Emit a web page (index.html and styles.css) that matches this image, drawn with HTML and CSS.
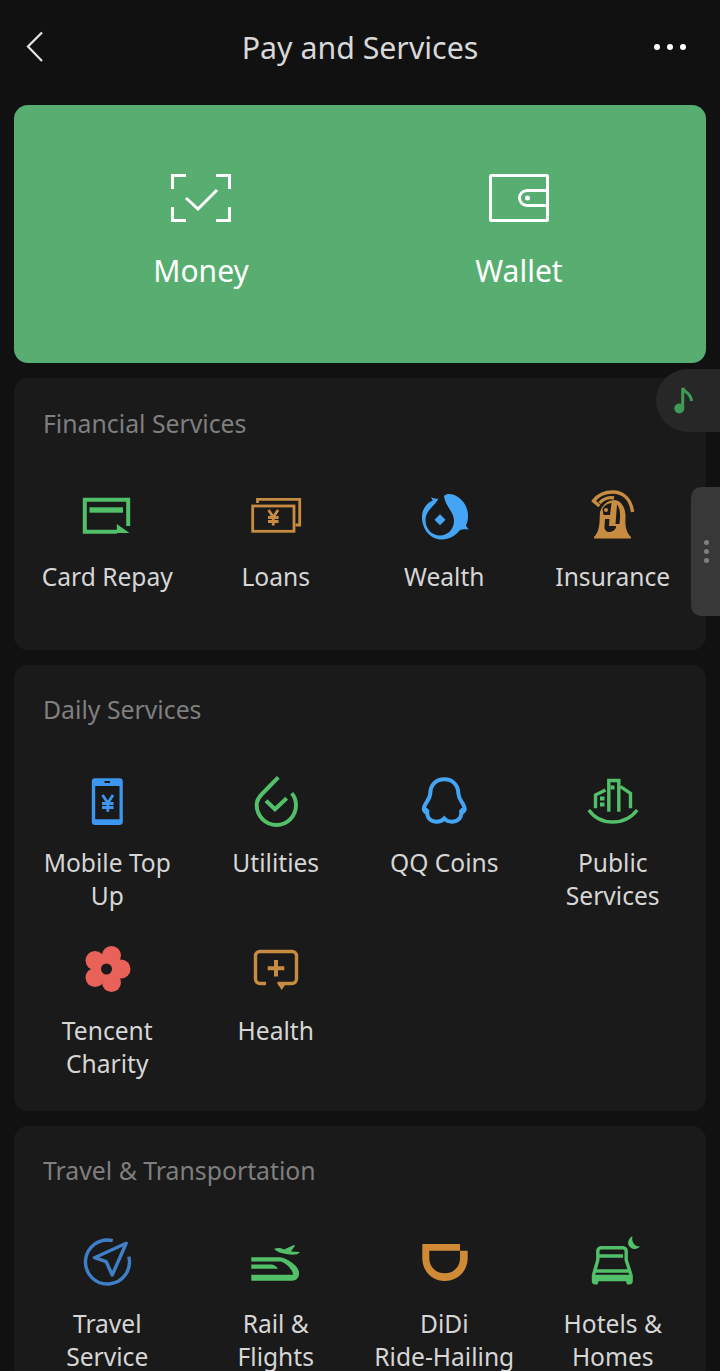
FILE: index.html
```html
<!DOCTYPE html>
<html>
<head>
    <title>Pay and Services</title>
    <link rel="stylesheet" href="styles.css">
</head>
<body>
    <div class="topbar">
        <svg class="back" width="20" height="34" viewBox="0 0 20 34"><path d="M17 2.500 3 16.500 17 31"/></svg>
        <div class="page-title">Pay and Services</div>
        <svg class="more" width="34" height="8" viewBox="0 0 34 8"><circle cx="4" cy="4" r="3"/><circle cx="17" cy="4" r="3"/><circle cx="30" cy="4" r="3"/></svg>
    </div>

    <div class="hero">
        <div class="hero-item">
            <svg class="hero-icon" width="60" height="48" viewBox="0 0 60 48"><path d="M15 1.500H1.500V15M45 1.500H58.500V15M15 46.500H1.500V33M45 46.500H58.500V33M15 24 27 35 46 16"/></svg>
            <div class="hero-label">Money</div>
        </div>
        <div class="hero-item">
            <svg class="hero-icon" width="60" height="48" viewBox="0 0 60 48"><rect x="1.500" y="1.500" width="57" height="45" rx="1"/><path d="M58 16.500H38a7.500 7.500 0 0 0 0 15H58"/><circle class="hero-dot" cx="38.500" cy="24" r="2.500"/></svg>
            <div class="hero-label">Wallet</div>
        </div>
    </div>

    <div class="card card-first">
        <div class="card-title">Financial Services</div>
        <div class="grid">
            <div class="item">
                <svg class="icon" viewBox="0 0 56 56"><path class="line green wide" d="M49.200 38V11.800H5.800V43.700H38"/><rect class="solid green" x="10.500" y="19.300" width="33.500" height="5.400"/><path class="solid green" d="M37.800 36 50.500 45H37.800Z"/></svg>
                <div class="label">Card Repay</div>
            </div>
            <div class="item">
                <svg class="icon" viewBox="0 0 56 56"><path class="line orange thin" d="M9.500 15V11.300H51.700V37H47.500"/><rect class="line orange thin" x="4.700" y="18" width="41.300" height="25.300"/><path class="line orange thin" d="M20.500 22 25.300 29 30.100 22M25.300 29V37.500M20 29.500H30.600M20 33.500H30.600"/></svg>
                <div class="label">Loans</div>
            </div>
            <div class="item">
                <svg class="icon" viewBox="0 0 56 56"><path class="solid blue" d="M15 9C17 10.500 20 11 22.500 10.500 20 17 9.500 22 9.500 32 9.500 41 16 47.500 24 47.500 32 47.500 38 41 38 32.500 38 24 29 18 28 8 31 5 37 5.500 42 9 48 13 52 20 52 28 52 32 51 35 50 37.500 50.500 39 51.500 40 53 41.500 49 41 46 41 44 42 39 48 33 51.500 26 51.500 14 51.500 6 41 6 29 6 22 10 15 17 12.500 16 11.500 15.500 10 15 9Z"/><path class="solid blue" d="M24 26.200 29.500 31.700 24 37.200 18.500 31.700Z"/></svg>
                <div class="label">Wealth</div>
            </div>
            <div class="item">
                <svg class="icon" viewBox="0 0 56 56"><path class="line orange" d="M47.500 24C46 11 38 4 28 4 20 4 12.500 7.500 8.500 13L14.500 18M14.500 15C18 11 24 9 29 10"/><path class="solid orange" d="M15 24C17 17 23 12 30 12 37 13 41 21 40.500 30 40 38 41 44 46 49V50.500H9V49C13 45 14 40 14.500 34Z"/><path class="hole" d="M17.500 21C19 17.500 22 15.500 26.500 15L25 27H18.500ZM32 16.500C34 19 35.500 23 35 30L34.500 36H30.500ZM20 31H24.500L24 38H31C31.500 41 28 44 24.500 44 21 44 19 41 19.500 38Z"/><circle class="solid orange" cx="21" cy="22" r="2"/></svg>
                <div class="label">Insurance</div>
            </div>
        </div>
    </div>

    <div class="card card-daily">
        <div class="card-title">Daily Services</div>
        <div class="grid">
            <div class="item">
                <svg class="icon" viewBox="0 0 56 56"><path class="solid phone" fill-rule="evenodd" d="M16 5.300H40.500A3.300 3.300 0 0 1 43.800 8.600V48.700A3.300 3.300 0 0 1 40.500 52H16A3.300 3.300 0 0 1 12.800 48.700V8.600A3.300 3.300 0 0 1 16 5.300ZM16.200 13V46.300H40.500V13ZM25.500 8V10H31V8Z"/><path class="line phone thin" d="M23.500 22 28.800 30 34 22M28.800 30V38.700M23 30.500H34.500M23 34.500H34.500"/></svg>
                <div class="label">Mobile Top Up</div>
            </div>
            <div class="item">
                <svg class="icon" viewBox="0 0 56 56"><path class="line green wide" d="M30.300 4.300 14 21C10.500 24.500 8.700 27.500 8.700 32 8.700 43 17.500 52 28.500 52 39.500 52 48 43 48 32 48 27.500 46.500 23.500 43.700 20.300M18 27.700 27 36.300 38.700 25.300"/></svg>
                <div class="label">Utilities</div>
            </div>
            <div class="item">
                <svg class="icon" viewBox="0 0 56 56"><path class="line blue wide" d="M28.300 6.300C20 6.300 14.500 12 14.300 20 14.200 25 11.500 27.500 9.500 31 7.500 34.500 7.500 37.500 9 38.500L12 36.500C10.500 38.500 11 43 13 45.500 16 49 23.500 50.500 28.300 45.500 33 50.500 40.500 49 43.500 45.500 45.500 43 46 38.500 44.500 36.500L47.500 38.500C49 37.500 49 34.500 47 31 45 27.500 42.500 25 42.300 20 42 12 36.500 6.300 28.300 6.300Z"/></svg>
                <div class="label">QQ Coins</div>
            </div>
            <div class="item">
                <svg class="icon" viewBox="0 0 56 56"><path class="line green" d="M3.800 37C15 53 40 53 52.200 37M23.800 38.700V7.500H33.800V38.700M35.500 13.700 45.500 20.300V35.300M20.500 17 10.500 22V35.300"/><path class="solid green" d="M15 23.500H19.500V27.500H15ZM15 29.500H19.500V33.500H15ZM25.500 12.500H29.500V16.500H25.500Z"/></svg>
                <div class="label">Public Services</div>
            </div>
            <div class="item">
                <svg class="icon" viewBox="0 0 56 56"><g class="solid red"><circle cx="42" cy="28" r="9.500"/><circle cx="32.500" cy="14.500" r="9.500"/><circle cx="16" cy="19.500" r="9.500"/><circle cx="16" cy="36.500" r="9.500"/><circle cx="32.500" cy="41.500" r="9.500"/><circle cx="28" cy="28" r="13"/></g><circle class="hole" cx="27.500" cy="28" r="5.500"/></svg>
                <div class="label">Tencent Charity</div>
            </div>
            <div class="item">
                <svg class="icon" viewBox="0 0 56 56"><path class="line orange" d="M18 42.500H12A4.500 4.500 0 0 1 7.500 38V15A4.500 4.500 0 0 1 12 10.500H44A4.500 4.500 0 0 1 48.500 15V38A4.500 4.500 0 0 1 44 42.500H30"/><path class="solid orange" d="M28.700 41.500H38.700L33.700 49ZM26 19H30V25.300H36.300V29.300H30V35.600H26V29.300H19.700V25.300H26Z"/></svg>
                <div class="label">Health</div>
            </div>
        </div>
    </div>

    <div class="card">
        <div class="card-title">Travel &amp; Transportation</div>
        <div class="grid">
            <div class="item">
                <svg class="icon" viewBox="0 0 56 56"><path class="line navy" d="M49.800 22.700A22 22 0 1 1 33.800 6.700"/><path class="line navy round" d="M47.200 9.300 15.500 23.700 27.200 27.700 33.200 41Z"/></svg>
                <div class="label">Travel Service</div>
            </div>
            <div class="item">
                <svg class="icon" viewBox="0 0 56 56"><path class="solid green" d="M26 15C30 13.500 33 14 36 15.500L46 11 47 11.500 43 17.500 52 18C50 21 45 21 42 20.500 35 20 29 18 26 15ZM3.300 23.300H32C38 24 50 31 51 38 51.500 43 49 46.700 44 46.700H3.300V40.700H45C45 36 38 29 33 27.500H3.300ZM3.300 30.500H24C27 31 29 33 30 34.700H3.300Z"/></svg>
                <div class="label">Rail &amp;<br>Flights</div>
            </div>
            <div class="item">
                <svg class="icon" viewBox="0 0 56 56"><path class="solid didi" fill-rule="evenodd" d="M6.300 10H44V16.700H51.700V24.300C51.700 37 41.500 47 28.700 47 16 47 6.300 37 6.300 24.300ZM13.300 16.700V24.300C13.300 33 20 39.300 28.700 39.300 37.500 39.300 44 33 44 24.300V16.700Z"/></svg>
                <div class="label">DiDi<br>Ride-Hailing</div>
            </div>
            <div class="item">
                <svg class="icon" viewBox="0 0 56 56"><path class="line green" d="M8.500 41 12.800 26V17A3.300 3.300 0 0 1 16 13.700H38A3.300 3.300 0 0 1 41.200 17V26L46 41M13 22H38M9.500 37H44.500"/><path class="solid green" d="M6.800 40.700H47.800V47C47.800 49.500 46.500 50.500 44 50.500H42L41 47.300H13.500L12.500 50.500H10.500C8 50.500 6.800 49.500 6.800 47Z"/><path class="solid green" d="M47.500 2C42.500 5 42 10.500 45 13 48 16 52.500 15.500 55 12.500 50 13 46 8 47.500 2Z"/></svg>
                <div class="label">Hotels &amp; Homes</div>
            </div>
        </div>
    </div>

    <div class="music-bubble">
        <svg width="26" height="36" viewBox="0 0 26 36"><circle cx="8.300" cy="26.500" r="5"/><path class="note-stem" d="M11.700 26V6C13 11 20 10 20.500 19"/></svg>
    </div>
    <div class="side-handle"><span></span><span></span><span></span></div>
</body>
</html>
```

FILE: styles.css
```css
html, body {
    height: 1371px;
    overflow: hidden;
}
body {
    position: relative;
    margin: 0;
    background-color: #111111;
    font-family: "Noto Sans", sans-serif;
    color: #d6d6d6;
}
.topbar {
    height: 105px;
    box-sizing: border-box;
    padding: 0 33px 10px;
    display: grid;
    grid-template-columns: 1fr auto 1fr;
    align-items: center;
}
.back {
    fill: none;
    stroke: #e6e6e6;
    stroke-width: 2.2;
    margin-left: -8px;
    margin-bottom: 1px;
}
.more {
    fill: #ffffff;
    justify-self: end;
    margin-bottom: 1px;
}
.page-title {
    font-size: 30.300px;
    color: #d8d8d8;
}
.hero {
    margin: 0 14px;
    height: 258px;
    box-sizing: border-box;
    padding: 69px 28px 0;
    background-color: #57ae70;
    border-radius: 14px;
    display: grid;
    grid-template-columns: 1fr 1fr;
}
.hero-item {
    display: flex;
    flex-direction: column;
    align-items: center;
}
.hero-icon {
    fill: none;
    stroke: #ffffff;
    stroke-width: 3;
}
.hero-dot {
    fill: #ffffff;
    stroke: none;
}
.hero-label {
    margin-top: 29px;
    font-size: 30px;
    line-height: 40px;
    color: #ffffff;
}
.card {
    margin: 15px 14px 0;
    padding: 0 9px;
    background-color: #1a1a1a;
    border-radius: 14px;
}
.card-daily {
    padding-bottom: 8px;
}
.card-title {
    height: 108px;
    box-sizing: border-box;
    padding: 27px 20px 0;
    font-size: 24.800px;
    line-height: 34px;
    color: #7f7f7f;
}
.card-first .card-title {
    height: 110px;
    padding-top: 28px;
}
.grid {
    display: grid;
    grid-template-columns: repeat(4, 1fr);
    grid-auto-rows: 162px;
    row-gap: 6px;
}
.item {
    display: flex;
    flex-direction: column;
    align-items: center;
    text-align: center;
}
.icon {
    width: 56px;
    height: 56px;
    flex: none;
}
.label {
    margin-top: 17px;
    width: 150px;
    font-size: 24.600px;
    line-height: 33px;
}
.card-first .label {
    margin-top: 16px;
}
.line {
    fill: none;
    stroke-width: 3.4;
}
.line.thin {
    stroke-width: 2.8;
}
.line.wide {
    stroke-width: 4;
}
.line.round {
    stroke-linejoin: round;
}
.line.green { stroke: #52c068; }
.line.orange { stroke: #c78b41; }
.line.blue { stroke: #45a5f5; }
.line.phone { stroke: #3d96f0; }
.line.navy { stroke: #3f7fc8; }
.solid.green { fill: #52c068; }
.solid.orange { fill: #c78b41; }
.solid.blue { fill: #45a5f5; }
.solid.phone { fill: #3d96f0; }
.solid.red { fill: #e8625a; }
.solid.didi { fill: #d08a35; }
.hole {
    fill: #1a1a1a;
}
.music-bubble {
    position: absolute;
    top: 369px;
    left: 656px;
    width: 64px;
    height: 63px;
    box-sizing: border-box;
    padding: 13px 0 0 15px;
    background-color: #272727;
    border-radius: 32px 0 0 32px;
    fill: #3f9a55;
}
.note-stem {
    fill: none;
    stroke: #3f9a55;
    stroke-width: 3;
}
.side-handle {
    position: absolute;
    top: 487px;
    left: 691px;
    width: 29px;
    height: 129px;
    box-sizing: border-box;
    padding-left: 13px;
    background-color: #383838;
    border-radius: 10px 0 0 10px;
    display: flex;
    flex-direction: column;
    justify-content: center;
    gap: 4px;
}
.side-handle span {
    width: 5px;
    height: 5px;
    border-radius: 50%;
    background-color: #808080;
}
```
